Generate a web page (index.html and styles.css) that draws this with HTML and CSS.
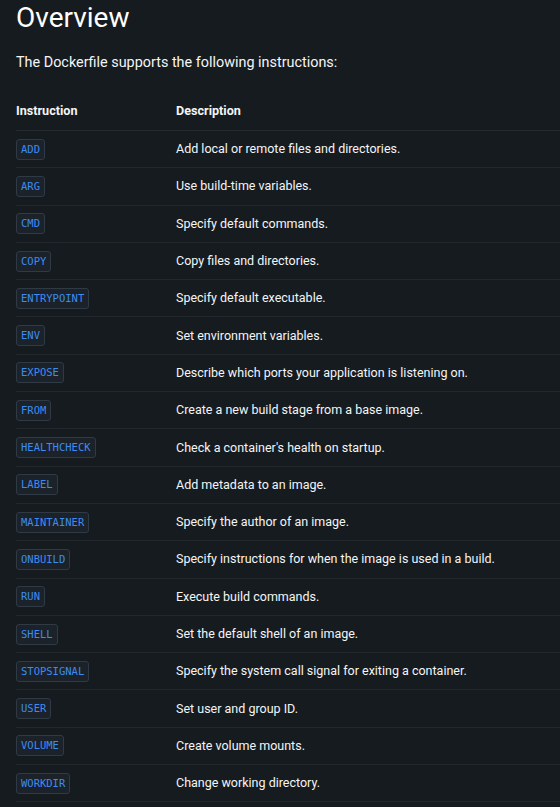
FILE: index.html
```html
<!DOCTYPE html>
<html>
<head>
<meta charset="utf-8">
<link rel="stylesheet" href="styles.css">
</head>
<body>
<main class="content">
  <h1 class="title">Overview</h1>
  <p class="intro">The Dockerfile supports the following instructions:</p>
  <table class="table">
    <thead>
      <tr><th class="col-ins">Instruction</th><th>Description</th></tr>
    </thead>
    <tbody>
      <tr><td><code>ADD</code></td><td>Add local or remote files and directories.</td></tr>
      <tr><td><code>ARG</code></td><td>Use build-time variables.</td></tr>
      <tr><td><code>CMD</code></td><td>Specify default commands.</td></tr>
      <tr><td><code>COPY</code></td><td>Copy files and directories.</td></tr>
      <tr><td><code>ENTRYPOINT</code></td><td>Specify default executable.</td></tr>
      <tr><td><code>ENV</code></td><td>Set environment variables.</td></tr>
      <tr><td><code>EXPOSE</code></td><td>Describe which ports your application is listening on.</td></tr>
      <tr><td><code>FROM</code></td><td>Create a new build stage from a base image.</td></tr>
      <tr><td><code>HEALTHCHECK</code></td><td>Check a container's health on startup.</td></tr>
      <tr><td><code>LABEL</code></td><td>Add metadata to an image.</td></tr>
      <tr><td><code>MAINTAINER</code></td><td>Specify the author of an image.</td></tr>
      <tr><td><code>ONBUILD</code></td><td>Specify instructions for when the image is used in a build.</td></tr>
      <tr><td><code>RUN</code></td><td>Execute build commands.</td></tr>
      <tr><td><code>SHELL</code></td><td>Set the default shell of an image.</td></tr>
      <tr><td><code>STOPSIGNAL</code></td><td>Specify the system call signal for exiting a container.</td></tr>
      <tr><td><code>USER</code></td><td>Set user and group ID.</td></tr>
      <tr><td><code>VOLUME</code></td><td>Create volume mounts.</td></tr>
      <tr><td><code>WORKDIR</code></td><td>Change working directory.</td></tr>
    </tbody>
  </table>
</main>
</body>
</html>
```
FILE: styles.css
```css
html, body {
  margin: 0;
  padding: 0;
  background: #161b1f;
}
body {
  font-family: Roboto, "Liberation Sans", sans-serif;
  color: #f3f5f7;
  overflow: hidden;
}
.content {
  padding: 0 0 0 16px;
}
.title {
  margin: 0;
  padding-top: 1px;
  font-size: 28px;
  font-weight: 400;
  line-height: 34px;
  color: #ffffff;
}
.intro {
  margin: 18px 0 0 0;
  font-size: 14.4px;
  line-height: 20px;
  font-weight: 400;
}
.table {
  margin-top: 28px;
  border-collapse: collapse;
  width: 100%;
}
.table th {
  text-align: left;
  font-size: 12.6px;
  font-weight: 700;
  line-height: 18px;
  padding: 1px 0 10px 0;
  border-bottom: 1px solid #242a2f;
}
.table th.col-ins {
  width: 160px;
}
.table td {
  font-size: 12.5px;
  font-weight: 400;
  line-height: 18px;
  height: 36.3px;
  padding: 0;
  border-bottom: 1px solid #22282d;
  vertical-align: middle;
}
code {
  display: inline-block;
  font-family: "DejaVu Sans Mono", "Liberation Mono", monospace;
  font-size: 10.5px;
  font-weight: 500;
  line-height: 19px;
  padding: 0 4px;
  color: #3d8cf2;
  background: #1b2229;
  border: 1px solid #2f3a45;
  border-radius: 3px;
  vertical-align: middle;
}
```
